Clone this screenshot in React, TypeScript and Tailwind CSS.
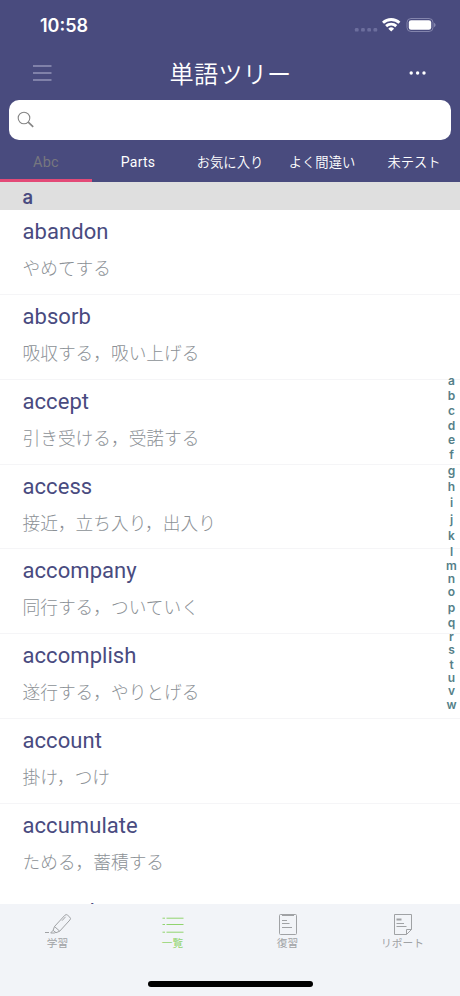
import type { ReactNode } from 'react'

interface Word {
  term: string
  meaning: string
}

const words: Word[] = [
  { term: 'abandon', meaning: 'やめてする' },
  { term: 'absorb', meaning: '吸収する，吸い上げる' },
  { term: 'accept', meaning: '引き受ける，受諾する' },
  { term: 'access', meaning: '接近，立ち入り，出入り' },
  { term: 'accompany', meaning: '同行する，ついていく' },
  { term: 'accomplish', meaning: '遂行する，やりとげる' },
  { term: 'account', meaning: '掛け，つけ' },
  { term: 'accumulate', meaning: 'ためる，蓄積する' },
  { term: 'accurate', meaning: '正確な' },
]

const tabs = ['お気に入り', 'よく間違い', '未テスト']

// letter and the height of its slot in the side index
const indexLetters: [string, number][] = [
  ['a', 15.5], ['b', 14.5], ['c', 15.5], ['d', 13.5], ['e', 15.5], ['f', 16], ['g', 15.5], ['h', 16],
  ['i', 17.5], ['j', 16], ['k', 15.5], ['l', 14], ['m', 13], ['n', 13.5], ['o', 15.5], ['p', 15],
  ['q', 14], ['r', 13.5], ['s', 14.5], ['t', 13], ['u', 13.5], ['v', 13.5], ['w', 14],
]

function StatusBar() {
  return (
    <div className="flex h-[50px] items-center justify-between pl-10 pr-[24px]">
      <span className="pt-px font-['Inter'] text-[18px] font-semibold text-white">10:58</span>
      <svg width="82" height="16" viewBox="0 0 82 16" fill="none">
        {[2.7, 8.9, 15.1, 21.3].map((x) => (
          <rect key={x} x={x - 1.8} y="11" width="3.7" height="3.6" rx="1.2" fill="#6c6e9d" />
        ))}
        <g stroke="#fff" strokeWidth="2.9">
          <path d="M29 5.8a12 12 0 0 1 16.4 0" />
          <path d="M32.1 9.1a7.5 7.5 0 0 1 10.2 0" />
        </g>
        <path d="M34.3 11.7a4.1 4.1 0 0 1 5.8 0l-2.9 2.9z" fill="#fff" />
        <rect x="53" y="1.5" width="26" height="13" rx="4" stroke="#8384ac" />
        <rect x="54.8" y="3.2" width="22.4" height="9.6" rx="2.3" fill="#fff" />
        <path d="M80.2 5.8c1.8.7 1.8 3.7 0 4.4z" fill="#9293b8" />
      </svg>
    </div>
  )
}

function Header() {
  return (
    <header className="h-[182px] shrink-0 bg-[#494b7e]">
      <StatusBar />
      <div className="flex h-[50px] items-center justify-between pl-[33px] pr-[33px]">
        <svg width="19" height="16" viewBox="0 0 19 16" className="-mt-1" stroke="#b7b8d3" strokeWidth="1.2">
          <path d="M0 1h18.5M0 8h18.5M0 15h18.5" />
        </svg>
        <h1 className="-mt-px text-[24.2px] font-[350] leading-9 tracking-[0.2px] text-white">単語ツリー</h1>
        <svg width="18" height="6" viewBox="0 0 18 6" className="-mt-1" fill="#fff">
          <circle cx="2.2" cy="3" r="1.7" />
          <circle cx="8.6" cy="3" r="1.7" />
          <circle cx="15" cy="3" r="1.7" />
        </svg>
      </div>
      <div className="mx-[9px] flex h-10 items-center rounded-[10px] bg-white pl-2">
        <svg width="18" height="18" viewBox="0 0 18 18" fill="none" stroke="#858585">
          <circle cx="7" cy="7" r="5.8" strokeWidth="1.1" />
          <path d="M11.2 11.2l5 4.7" strokeWidth="1.7" />
        </svg>
      </div>
      <nav className="flex h-[42px] text-center leading-[45px] text-white">
        <div className="flex-1 border-b-[3px] border-[#e34a77] text-[14.5px] tracking-[0.2px] text-[#77777f]">Abc</div>
        <div className="flex-1 text-[14px] tracking-[0.2px]">Parts</div>
        {tabs.map((tab) => (
          <div key={tab} className="flex-1 whitespace-nowrap text-[13.3px] font-[350]">
            {tab}
          </div>
        ))}
      </nav>
    </header>
  )
}

function WordRow({ term, meaning }: Word) {
  return (
    <li className="h-[84.85px] shrink-0 border-b border-[#f5f5f7] pl-[22.5px] nth-[8]:border-transparent">
      <p className="h-11 text-[22px] leading-[43px] tracking-[0.06px] text-[#494b80]">{term}</p>
      <p className="text-[17.7px] font-light leading-[30px] text-[#8c9196]">{meaning}</p>
    </li>
  )
}

function LetterIndex() {
  return (
    <div className="absolute right-0 top-[373.5px] w-[17px] text-center font-['Inter'] text-[12px] font-semibold text-[#557f88]">
      {indexLetters.map(([letter, height]) => (
        <div key={letter} className="leading-[13px]" style={{ height }}>
          {letter}
        </div>
      ))}
    </div>
  )
}

function TabItem({ label, active = false, children }: { label: string; active?: boolean; children: ReactNode }) {
  return (
    <div className={active ? 'flex flex-1 flex-col items-center text-[#91d46f]' : 'flex flex-1 flex-col items-center text-[#a0a2a5]'}>
      <svg width="28" height="24" viewBox="0 0 28 24" fill="none" stroke="currentColor" strokeWidth="1">
        {children}
      </svg>
      <span className="text-[10.7px] leading-4">{label}</span>
    </div>
  )
}

function BottomBar() {
  return (
    <footer className="flex h-[92px] shrink-0 flex-col justify-between bg-[#f2f4f8] pb-[9px] pt-[8px]">
      <div className="flex">
        <TabItem label="学習">
          <path d="M10.5 14.5L20.8 3.3a2 2 0 0 1 2.8-.1l2.2 2a2 2 0 0 1 .1 2.8L15.7 19.2z" />
          <path d="M10.5 14.5l-1.4 3.8 2.8 2.5 3.8-1.6M18 8.7l3.6-3.9M9.1 18.3L6.7 21h3.7l1.5-1M1 20.5h4" />
        </TabItem>
        <TabItem label="一覧" active>
          <path d="M3.5 6.2H6M7.5 6.2h17M3.5 12.5H6M7.5 12.5h17M3.5 20.2H6M7.5 20.2h17" />
        </TabItem>
        <TabItem label="復習">
          <rect x="5.5" y="2.5" width="17" height="20" rx="1" />
          <path d="M8 3h12" strokeWidth="2" />
          <path d="M8 8.5h5M8 11.5h7.5M8 15.5h10" />
        </TabItem>
        <TabItem label="リポート">
          <path d="M5.5 2.5h17v15l-5 5h-12zM22.5 17.5h-5v5" />
          <path d="M7.5 7.5h5" strokeWidth="2" />
          <path d="M7.5 11.5h7.5M7.5 14.5h10" />
        </TabItem>
      </div>
      <div className="mx-auto h-[6px] w-[165px] rounded-full bg-black" />
    </footer>
  )
}

export default function App() {
  return (
    <div lang="ja" className="relative flex h-[996px] w-[460px] flex-col overflow-hidden bg-white font-['Roboto','Noto_Sans_CJK_JP',sans-serif]">
      <Header />
      <div className="h-7 shrink-0 bg-[#dfdfdf] pl-[22.5px] font-['Inter'] text-[18.5px] font-semibold leading-[30px] text-[#494b80]">a</div>
      <ul className="flex min-h-0 flex-1 flex-col overflow-hidden">
        {words.map((word) => (
          <WordRow key={word.term} {...word} />
        ))}
      </ul>
      <LetterIndex />
      <BottomBar />
    </div>
  )
}
